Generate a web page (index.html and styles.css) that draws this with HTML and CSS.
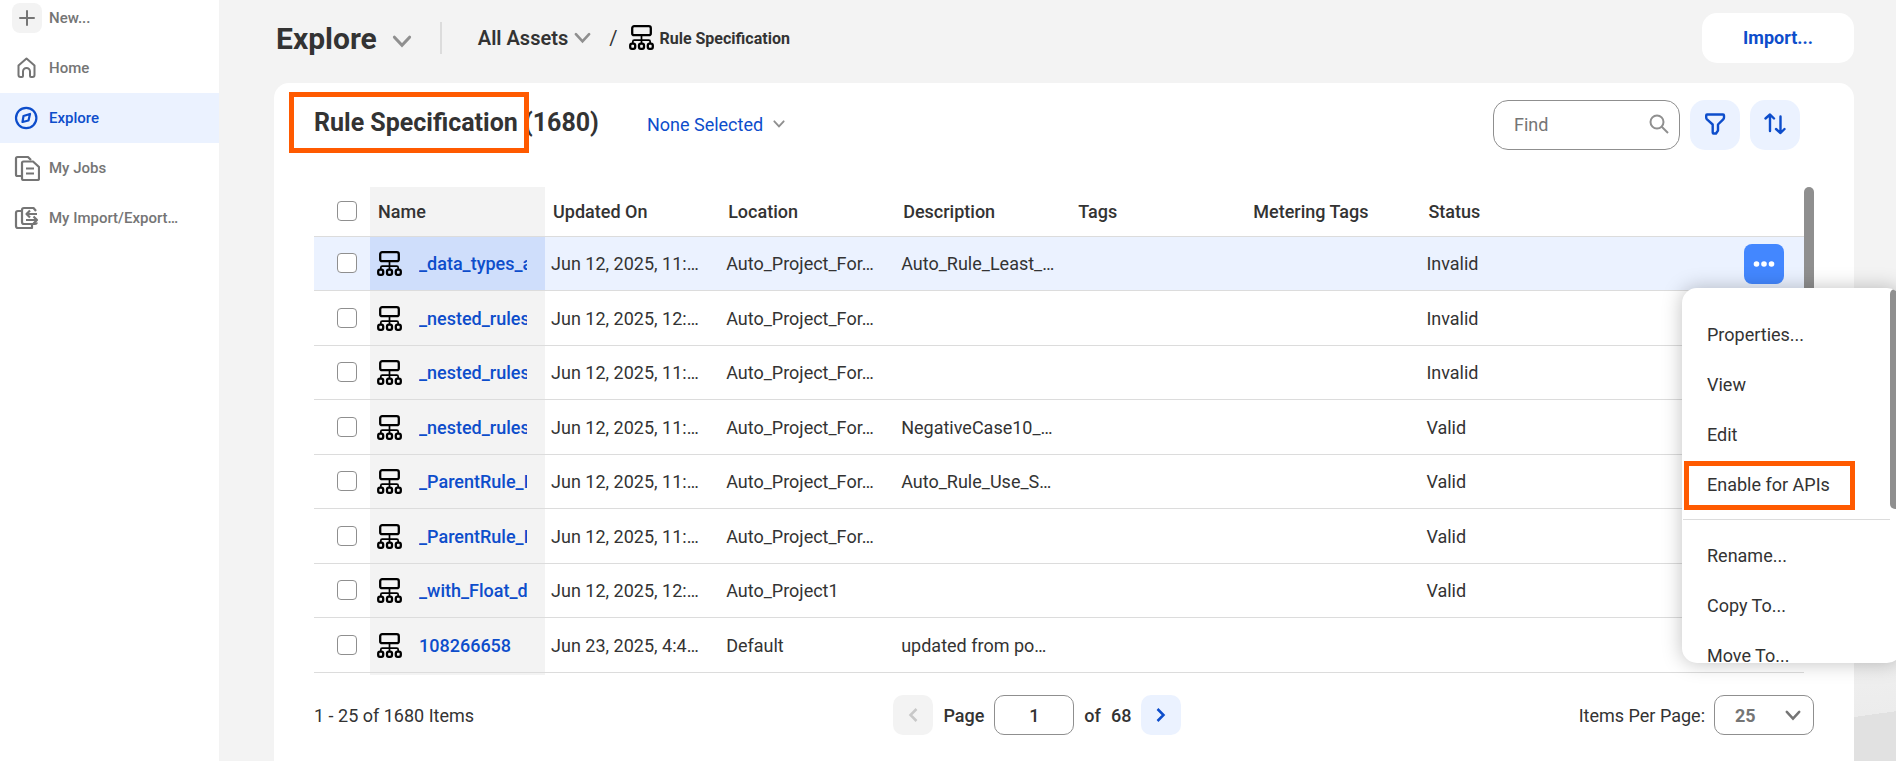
FILE: index.html
```
<!DOCTYPE html>
<html lang="en">
<head>
    <meta charset="UTF-8">
    <meta name="viewport" content="width=device-width, initial-scale=1.0">
    <title>Explore - Rule Specification</title>
    <link rel="stylesheet" href="styles.css">
</head>
<body>
    <svg class="symbols" aria-hidden="true">
        <symbol id="rule" viewBox="0 0 25 25">
            <g fill="none" stroke="#000" stroke-width="2.3">
                <rect x="3.2" y="1.2" width="18.6" height="9" rx="2"/>
                <path d="M12.5 10.5v8M3.8 18.5v-1.8q0-1.500 1.500-1.500h14.400q1.500 0 1.500 1.500v1.800" stroke-width="1.7"/>
                <rect x="1.2" y="18.6" width="5" height="5.2" rx="1.8"/>
                <rect x="10" y="18.6" width="5" height="5.2" rx="1.8"/>
                <rect x="18.8" y="18.6" width="5" height="5.2" rx="1.8"/>
            </g>
        </symbol>
        <symbol id="chevron" viewBox="0 0 18 12">
            <path d="M2 2l7 7.500L16 2" fill="none" stroke="currentColor" stroke-width="2.8" stroke-linecap="round"/>
        </symbol>
    </svg>

    <div class="app">
        <nav class="sidebar">
            <a href="#" class="nav-item new">
                <span class="nav-icon plus"><svg width="16" height="16" viewBox="0 0 16 16"><path d="M8 1v14M1 8h14" stroke="currentColor" stroke-width="2" stroke-linecap="round"/></svg></span>
                New...
            </a>
            <a href="#" class="nav-item">
                <span class="nav-icon"><svg width="26" height="26" viewBox="0 0 26 26" fill="none" stroke="currentColor" stroke-width="2" stroke-linejoin="round"><path d="M4.500 10.500L12.500 3.500l8 7V20q0 2-2 2h-1.500q-1 0-1-1v-4.500a3.500 3.500 0 0 0-7 0V21q0 1-1 1H6.500q-2 0-2-2z"/></svg></span>
                Home
            </a>
            <a href="#" class="nav-item active">
                <span class="nav-icon"><svg width="26" height="26" viewBox="0 0 26 26" fill="none" stroke="currentColor" stroke-width="2.200" stroke-linejoin="round"><circle cx="12.200" cy="13" r="10.200"/><path d="M16 9l-1.500 6.500L8.500 17l1-6z"/></svg></span>
                Explore
            </a>
            <a href="#" class="nav-item">
                <span class="nav-icon"><svg width="26" height="26" viewBox="0 0 26 26" fill="none" stroke="currentColor" stroke-width="2.200" stroke-linejoin="round"><path d="M8 21H3.500Q2 21 2 19.500v-16Q2 2 3.500 2H14l3 3"/><path d="M9.500 6.500H19l6 5.500v11.500q0 1.500-1.500 1.500h-14Q8 25 8 23.500V8q0-1.500 1.500-1.500z"/><path d="M12 13.500h8M12 18.500h8"/></svg></span>
                My Jobs
            </a>
            <a href="#" class="nav-item">
                <span class="nav-icon"><svg width="26" height="26" viewBox="0 0 26 26" fill="none" stroke="currentColor" stroke-width="2.200" stroke-linejoin="round"><path d="M7 6H4Q2 6 2 8v13q0 2 2 2h14v-3"/><path d="M22 6l-2.500-3H10Q8 3 8 5v12q0 2 2 2h11q1.500 0 2-1.500"/><path d="M23 9H13M16 5.500L12.500 9l3.500 3.500M12 15h11M19.500 11.500L23 15l-3.500 3.500"/></svg></span>
                My Import/Export…
            </a>
        </nav>

        <main class="main">
            <header class="page-header">
                <h1>Explore</h1>
                <svg class="chevron title-chevron"><use href="#chevron"/></svg>
                <span class="divider"></span>
                <a href="#" class="crumb">All Assets</a>
                <svg class="chevron crumb-chevron"><use href="#chevron"/></svg>
                <span class="slash">/</span>
                <svg class="rule-icon"><use href="#rule"/></svg>
                <span class="crumb-current">Rule Specification</span>
                <button type="button" class="import">Import...</button>
            </header>

            <section class="card">
                <div class="toolbar">
                    <h2><span class="marked">Rule Specification</span> (1680)</h2>
                    <button type="button" class="selected">None Selected <svg class="chevron small-chevron"><use href="#chevron"/></svg></button>
                    <div class="find">
                        <input type="text" placeholder="Find" aria-label="Find">
                        <svg width="20" height="20" viewBox="0 0 20 20" fill="none" stroke="#8f8f8f" stroke-width="2"><circle cx="8" cy="8" r="6.500"/><path d="M12.500 12.500L19 19"/></svg>
                    </div>
                    <button type="button" class="tool" aria-label="Filter"><svg width="24" height="24" viewBox="0 0 24 24" fill="none" stroke="currentColor" stroke-width="2.400" stroke-linejoin="round"><path d="M4 2.500h16q1 0 1 1v2q0 1-.8 1.800L15 12.500v6L13 21.500h-2.500q-.8 0-.8-1v-8L4 7.300Q3.200 6.500 3.200 5.500v-2q0-1 .8-1z"/></svg></button>
                    <button type="button" class="tool" aria-label="Sort"><svg width="24" height="24" viewBox="0 0 24 24" fill="none" stroke="currentColor" stroke-width="2.400" stroke-linecap="round" stroke-linejoin="round"><path d="M7 19V3M2.500 6.500L7 2.500l4 4M17.500 4.500v16M13 17l4.500 4 4-4"/></svg></button>
                </div>

                <div class="grid">
                    <table>
                        <colgroup>
                            <col class="col-check">
                            <col class="col-data">
                            <col class="col-data">
                            <col class="col-data">
                            <col class="col-data">
                            <col class="col-data">
                            <col class="col-data">
                            <col class="col-data">
                            <col>
                        </colgroup>
                        <thead>
                            <tr>
                                <th class="check"><input type="checkbox" aria-label="Select all"></th>
                                <th class="name">Name</th>
                                <th>Updated On</th>
                                <th>Location</th>
                                <th>Description</th>
                                <th>Tags</th>
                                <th>Metering Tags</th>
                                <th>Status</th>
                                <th></th>
                            </tr>
                        </thead>
                        <tbody>
                            <tr class="current">
                                <td class="check"><input type="checkbox" aria-label="Select row 1"></td>
                                <td class="name"><div class="asset"><svg class="rule-icon"><use href="#rule"/></svg><a href="#">_data_types_all</a></div></td>
                                <td>Jun 12, 2025, 11:…</td>
                                <td>Auto_Project_For…</td>
                                <td>Auto_Rule_Least_…</td>
                                <td></td>
                                <td></td>
                                <td>Invalid</td>
                                <td class="actions">
                                    <div class="actions-box">
                                        <button type="button" class="more" aria-label="Actions"><svg width="22" height="6" viewBox="0 0 22 6" fill="#fff"><circle cx="3.500" cy="3" r="2.800"/><circle cx="11" cy="3" r="2.800"/><circle cx="18.500" cy="3" r="2.800"/></svg></button>
                                        <div class="menu">
                                            <button type="button">Properties...</button>
                                            <button type="button">View</button>
                                            <button type="button">Edit</button>
                                            <button type="button" class="enable">Enable for APIs</button>
                                            <hr>
                                            <button type="button">Rename...</button>
                                            <button type="button">Copy To...</button>
                                            <button type="button">Move To...</button>
                                            <span class="menu-thumb"></span>
                                        </div>
                                    </div>
                                </td>
                            </tr>
                            <tr>
                                <td class="check"><input type="checkbox" aria-label="Select row 2"></td>
                                <td class="name"><div class="asset"><svg class="rule-icon"><use href="#rule"/></svg><a href="#">_nested_rules</a></div></td>
                                <td>Jun 12, 2025, 12:…</td>
                                <td>Auto_Project_For…</td>
                                <td></td>
                                <td></td>
                                <td></td>
                                <td>Invalid</td>
                                <td></td>
                            </tr>
                            <tr>
                                <td class="check"><input type="checkbox" aria-label="Select row 3"></td>
                                <td class="name"><div class="asset"><svg class="rule-icon"><use href="#rule"/></svg><a href="#">_nested_rules</a></div></td>
                                <td>Jun 12, 2025, 11:…</td>
                                <td>Auto_Project_For…</td>
                                <td></td>
                                <td></td>
                                <td></td>
                                <td>Invalid</td>
                                <td></td>
                            </tr>
                            <tr>
                                <td class="check"><input type="checkbox" aria-label="Select row 4"></td>
                                <td class="name"><div class="asset"><svg class="rule-icon"><use href="#rule"/></svg><a href="#">_nested_rules</a></div></td>
                                <td>Jun 12, 2025, 11:…</td>
                                <td>Auto_Project_For…</td>
                                <td>NegativeCase10_…</td>
                                <td></td>
                                <td></td>
                                <td>Valid</td>
                                <td></td>
                            </tr>
                            <tr>
                                <td class="check"><input type="checkbox" aria-label="Select row 5"></td>
                                <td class="name"><div class="asset"><svg class="rule-icon"><use href="#rule"/></svg><a href="#">_ParentRule_D</a></div></td>
                                <td>Jun 12, 2025, 11:…</td>
                                <td>Auto_Project_For…</td>
                                <td>Auto_Rule_Use_S…</td>
                                <td></td>
                                <td></td>
                                <td>Valid</td>
                                <td></td>
                            </tr>
                            <tr>
                                <td class="check"><input type="checkbox" aria-label="Select row 6"></td>
                                <td class="name"><div class="asset"><svg class="rule-icon"><use href="#rule"/></svg><a href="#">_ParentRule_D</a></div></td>
                                <td>Jun 12, 2025, 11:…</td>
                                <td>Auto_Project_For…</td>
                                <td></td>
                                <td></td>
                                <td></td>
                                <td>Valid</td>
                                <td></td>
                            </tr>
                            <tr>
                                <td class="check"><input type="checkbox" aria-label="Select row 7"></td>
                                <td class="name"><div class="asset"><svg class="rule-icon"><use href="#rule"/></svg><a href="#">_with_Float_d</a></div></td>
                                <td>Jun 12, 2025, 12:…</td>
                                <td>Auto_Project1</td>
                                <td></td>
                                <td></td>
                                <td></td>
                                <td>Valid</td>
                                <td></td>
                            </tr>
                            <tr>
                                <td class="check"><input type="checkbox" aria-label="Select row 8"></td>
                                <td class="name"><div class="asset"><svg class="rule-icon"><use href="#rule"/></svg><a href="#">108266658</a></div></td>
                                <td>Jun 23, 2025, 4:4…</td>
                                <td>Default</td>
                                <td>updated from po…</td>
                                <td></td>
                                <td></td>
                                <td></td>
                                <td></td>
                            </tr>
                        </tbody>
                        <tfoot>
                            <tr>
                                <td></td>
                                <td class="name"></td>
                                <td colspan="7"></td>
                            </tr>
                        </tfoot>
                    </table>
                    <div class="scrollbar"></div>
                </div>

                <footer class="pager">
                    <span>1 - 25 of 1680 Items</span>
                    <div class="pages">
                        <button type="button" class="page-btn" disabled aria-label="Previous page"><svg width="10" height="16" viewBox="0 0 10 16" fill="none" stroke="currentColor" stroke-width="2.500"><path d="M8.500 2L2.500 8l6 6"/></svg></button>
                        <label for="page">Page</label>
                        <input type="text" id="page" value="1">
                        <span>of</span>
                        <span>68</span>
                        <button type="button" class="page-btn" aria-label="Next page"><svg width="10" height="16" viewBox="0 0 10 16" fill="none" stroke="currentColor" stroke-width="2.500"><path d="M1.500 2l6 6-6 6"/></svg></button>
                    </div>
                    <div class="per-page">
                        <label for="per-page">Items Per Page:</label>
                        <div class="select">
                            <select id="per-page"><option>25</option></select>
                            <svg class="chevron"><use href="#chevron"/></svg>
                        </div>
                    </div>
                </footer>
            </section>
        </main>
    </div>
</body>
</html>
```
FILE: styles.css
```
* {
    box-sizing: border-box;
}
body {
    margin: 0;
    overflow: hidden;
    font-family: Roboto, "Liberation Sans", sans-serif;
    font-size: 18px;
    color: #333;
    background-color: #f3f3f3;
}
button, input, select {
    font: inherit;
    color: inherit;
}
button {
    border: none;
    background: none;
    padding: 0;
    cursor: pointer;
}
a {
    color: #0d4dcb;
    text-decoration: none;
}
svg {
    display: block;
    flex: none;
}
.symbols {
    display: none;
}
.app {
    display: flex;
    min-height: 100vh;
}

/* sidebar */
.sidebar {
    width: 219px;
    flex: none;
    background-color: #fff;
}
.nav-item {
    display: flex;
    align-items: center;
    gap: 7px;
    height: 50px;
    padding-left: 12px;
    font-size: 15px;
    font-weight: 500;
    color: #757575;
}
.nav-item.new {
    height: 43px;
    padding-bottom: 7px;
}
.nav-item.active {
    color: #0d4dcb;
    background-color: #ebf2ff;
}
.nav-icon {
    display: flex;
    align-items: center;
    justify-content: center;
    width: 30px;
    height: 30px;
}
.plus {
    border-radius: 8px;
    background-color: #f3f3f3;
}

/* header */
.main {
    flex: 1;
    min-width: 0;
    display: flex;
    flex-direction: column;
    padding: 13px 42px 0 55px;
    background: linear-gradient(172deg, #f3f3f3 84%, #ececec 95%, #e1e1e1 95%);
}
.page-header {
    display: flex;
    align-items: center;
    height: 50px;
    padding-left: 2px;
    margin-bottom: 20px;
}
h1 {
    margin: 0;
    font-size: 30px;
    font-weight: 700;
}
.chevron {
    width: 14px;
    height: 10px;
    color: #8f8f8f;
}
.title-chevron {
    width: 20px;
    height: 13px;
    margin: 6px 28px 0 15px;
}
.divider {
    width: 2px;
    height: 32px;
    background-color: #dcdcdc;
}
.crumb {
    margin-left: 36px;
    font-size: 20px;
    font-weight: 600;
    color: #333;
}
.crumb-chevron {
    width: 17px;
    height: 12px;
    margin: 0 18px 0 6px;
}
.slash {
    margin-right: 12px;
    font-size: 20px;
}
.rule-icon {
    width: 25px;
    height: 25px;
}
.page-header .rule-icon {
    margin-bottom: 2px;
}
.crumb-current {
    margin-left: 5px;
    font-weight: 700;
    font-size: 16px;
}
.import {
    width: 152px;
    height: 50px;
    margin-left: auto;
    padding-bottom: 2px;
    border-radius: 15px;
    background-color: #fff;
    color: #0d4dcb;
    font-weight: 700;
}

/* asset list */
.card {
    flex: 1;
    padding: 17px 40px 0;
    border-radius: 15px 15px 0 0;
    background-color: #fff;
}
.toolbar {
    display: flex;
    align-items: center;
    gap: 10px;
    padding-right: 14px;
    margin-bottom: 37px;
}
h2 {
    margin: 0 38px 5px 0;
    font-size: 25px;
    font-weight: 700;
}
.marked {
    position: relative;
}
.marked::after {
    content: "";
    position: absolute;
    inset: -16px -11px -16px -25px;
    border: 5px solid #ff5a00;
}
.selected {
    display: flex;
    align-items: center;
    gap: 10px;
    padding-bottom: 2px;
    color: #0d4dcb;
}
.small-chevron {
    width: 12px;
    height: 8px;
}
.find {
    display: flex;
    align-items: center;
    width: 187px;
    height: 50px;
    margin-left: auto;
    padding: 0 10px 2px 20px;
    border: 1px solid #8f8f8f;
    border-radius: 15px;
}
.find input {
    flex: 1;
    min-width: 0;
    padding: 0;
    border: none;
    outline: none;
}
.find input::placeholder {
    color: #757575;
}
.tool {
    display: flex;
    align-items: center;
    justify-content: center;
    width: 50px;
    height: 50px;
    padding-bottom: 3px;
    border-radius: 15px;
    background-color: #ebf2ff;
    color: #0d4dcb;
}

/* table */
.grid {
    display: flex;
}
table {
    flex: 1;
    width: 100%;
    min-width: 0;
    table-layout: fixed;
    border-spacing: 0;
}
.col-check {
    width: 56px;
}
.col-data {
    width: 11.75%;
}
th, td {
    height: 54px;
    padding: 0 6px;
    border-bottom: 1px solid #dcdcdc;
    text-align: left;
    white-space: nowrap;
}
th {
    height: 50px;
    padding: 0 8px;
    font-weight: 500;
}
tbody tr:nth-child(even) td {
    height: 55px;
}
tfoot td {
    height: 2px;
    padding: 0;
    border: none;
}
.check {
    padding: 0 0 1px 23px;
}
input[type="checkbox"] {
    appearance: none;
    display: block;
    width: 20px;
    height: 20px;
    margin: 0;
    border: 1px solid #8f8f8f;
    border-radius: 4px;
    background-color: #fff;
}
.name {
    background-color: #f3f3f3;
}
.asset {
    display: flex;
    align-items: center;
    gap: 17px;
    padding: 0 12px 0 1px;
}
.asset a {
    overflow: hidden;
    font-weight: 500;
}
.current td {
    background-color: #ebf2ff;
}
.current .name {
    background-color: #cfdefb;
}
.scrollbar {
    flex: none;
    width: 10px;
    height: 240px;
    border-radius: 5px;
    background-color: #8f8f8f;
}

/* row menu */
.current .actions {
    padding: 0 20px;
}
.actions-box {
    position: relative;
    width: 40px;
    margin-left: auto;
}
.more {
    display: flex;
    align-items: center;
    justify-content: center;
    width: 40px;
    height: 40px;
    border-radius: 8px;
    background-color: #4387ff;
}
.menu {
    position: absolute;
    z-index: 1;
    top: 44px;
    left: -62px;
    width: 220px;
    height: 375px;
    padding-top: 22px;
    overflow: hidden;
    border-radius: 15px;
    background-color: #fff;
    box-shadow: 0 0 20px rgba(0, 0, 0, 0.25);
}
.menu button {
    display: block;
    width: 100%;
    height: 50px;
    padding-left: 25px;
    text-align: left;
}
.menu hr {
    height: 1px;
    margin: 9px 12px 11px 1px;
    border: none;
    background-color: #dcdcdc;
}
.enable {
    position: relative;
}
.enable::after {
    content: "";
    position: absolute;
    inset: 1px 47px 0 2px;
    border: 5px solid #ff5a00;
}
.menu-thumb {
    position: absolute;
    top: 1px;
    right: 2px;
    width: 10px;
    height: 220px;
    border-radius: 5px;
    background-color: #8f8f8f;
}

/* pager */
.pager {
    display: flex;
    align-items: center;
    justify-content: space-between;
    margin-top: 20px;
}
.pages {
    display: flex;
    align-items: center;
    gap: 10px;
    margin-left: 22px;
    font-weight: 500;
}
.pages input {
    width: 80px;
    height: 40px;
    border: 1px solid #8f8f8f;
    border-radius: 10px;
    text-align: center;
}
.page-btn {
    display: flex;
    align-items: center;
    justify-content: center;
    width: 40px;
    height: 40px;
    border-radius: 10px;
    background-color: #ebf2ff;
    color: #0d4dcb;
}
.page-btn:disabled {
    background-color: #f3f3f3;
    color: #c8c8c8;
}
.per-page {
    display: flex;
    align-items: center;
    gap: 9px;
}
.select {
    position: relative;
}
.select select {
    appearance: none;
    width: 100px;
    height: 40px;
    padding-left: 20px;
    border: 1px solid #8f8f8f;
    border-radius: 10px;
    background-color: #fff;
    color: #757575;
    font-weight: 700;
}
.select .chevron {
    position: absolute;
    top: 15px;
    right: 13px;
    width: 16px;
    height: 11px;
    color: #757575;
    pointer-events: none;
}
```
